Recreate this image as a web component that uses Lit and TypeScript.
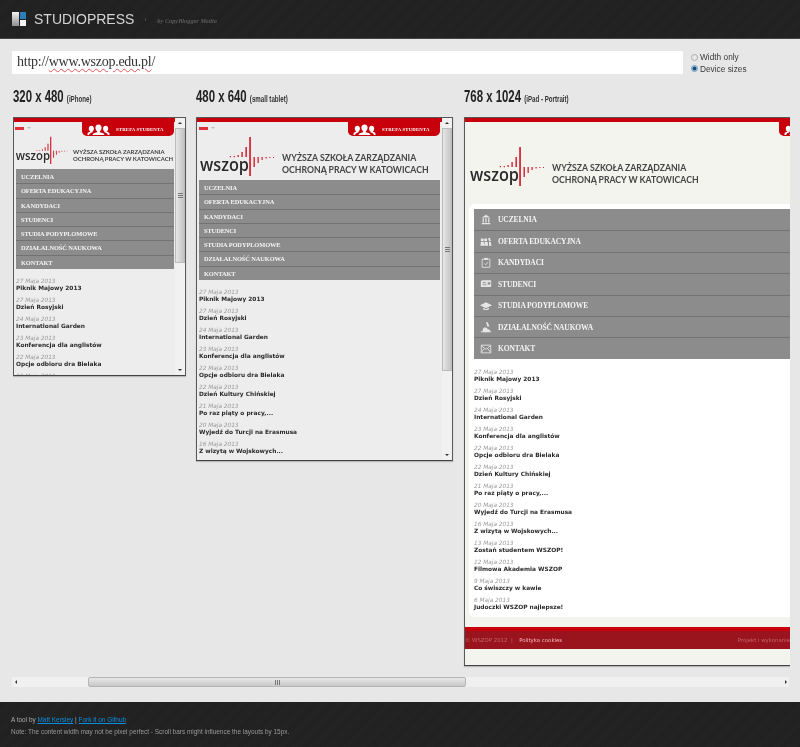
import { LitElement, html, css, svg } from "lit";
import { customElement, property } from "lit/decorators.js";

const NEWS: [string, string][] = [
  ["27 Maja 2013", "Piknik Majowy 2013"],
  ["27 Maja 2013", "Dzień Rosyjski"],
  ["24 Maja 2013", "International Garden"],
  ["23 Maja 2013", "Konferencja dla anglistów"],
  ["22 Maja 2013", "Opcje odbioru dra Bielaka"],
  ["22 Maja 2013", "Dzień Kultury Chińskiej"],
  ["21 Maja 2013", "Po raz piąty o pracy,..."],
  ["20 Maja 2013", "Wyjedź do Turcji na Erasmusa"],
  ["16 Maja 2013", "Z wizytą w Wojskowych..."],
  ["13 Maja 2013", "Zostań studentem WSZOP!"],
  ["12 Maja 2013", "Filmowa Akademia WSZOP"],
  ["9 Maja 2013", "Co świszczy w kawie"],
  ["6 Maja 2013", "Judoczki WSZOP najlepsze!"],
];

const ICONS = [
  svg`<path d="M2 4 7 1l5 3zM3 5h1.500v5H3zM6.200 5h1.500v5H6.200zM9.500 5H11v5H9.500zM2 10.500h10V12H2z"/>`,
  svg`<path d="M1 3h3.200v3H1zM5 3h3.200v3H5zM9.500 2.500l2-.6 1.200 4-2 .6zM1 7h3.500l.5 4.500H.5zM5.500 7H9l.5 4.500H5zM10.500 7h2l1 4.500h-3z"/>`,
  svg`<path fill="none" stroke="currentColor" stroke-width="1" d="M2.500 2.500h9v9.500h-9zM5.500 7.500l1.300 1.500L9 6"/><path d="M5 1h4v2.500H5z"/>`,
  svg`<path d="M1 3.500 3 2.500h10v8H1z"/><path fill="#8c8c8c" d="M3 5h4v1H3zM9 5h3v2.500H9zM3 7.500h5v1H3z"/>`,
  svg`<path d="M7 2.500 14 6 7 9.500 0 6zM3.500 9v1.700c2 1.300 5 1.300 7 0V9L7 10.800z"/>`,
  svg`<path d="M7 1.500h2l2 5H8.500zM6 7.500a3 3 0 1 1-1 .2zM10 9.500a1.600 1.600 0 1 1-.1 0zM1 12h12v1H1z"/>`,
  svg`<path fill="none" stroke="currentColor" stroke-width="1" d="M1.500 2.500h11v9h-11zM1.500 3 7 7.500 12.500 3M1.500 11 5 6.500M12.500 11 9 6.500"/>`,
];

const MENU = ["Uczelnia", "Oferta edukacyjna", "Kandydaci", "Studenci", "Studia podyplomowe", "Działalność naukowa", "Kontakt"];

const logo = svg`
  <text x="1" y="34.700" class="wz" textLength="49" lengthAdjust="spacingAndGlyphs">wszop</text>
  <g fill="#d4202c">
    <path d="M50.200 1h1.700v39h-1.700zM46.400 11h1.500v10h-1.500zM42.400 16h1.400v5h-1.400zM38.500 19h1.300v2h-1.300zM34.700 20h1.200v1.200h-1.200zM30.800 20h1.200v1.200h-1.200z"/>
    <path d="M54.500 21h1.400v10h-1.400zM58.500 21h1.300v6h-1.300zM62.500 21h1.200v3h-1.200zM66.500 21h1.200v1.400h-1.200zM70.300 21h1.100v1.100h-1.100zM74 21h1v1h-1z"/>
  </g>`;

const people = svg`
  <path d="M12 .5c2.200 0 3.400 1.700 3.400 3.700 0 1.600-.8 3-1.900 3.700v1c2.800.6 5 1.400 5 3v.6h-13v-.6c0-1.600 2.200-2.400 5-3v-1C9.400 7.200 8.600 5.800 8.600 4.200 8.600 2.200 9.800.5 12 .5z"/>
  <path d="M4.200 2c1.800 0 2.800 1.400 2.800 3.100 0 1.300-.6 2.400-1.500 3v1c-2.200.6-3.200 1.400-3.800 2.900H0v-1.300c0-1.100 1.300-1.700 3-2.200v-.4C2 7.500 1.400 6.400 1.400 5.100 1.400 3.400 2.400 2 4.200 2zM19.800 2c1.800 0 2.800 1.400 2.800 3.100 0 1.300-.6 2.400-1.600 3v.4c1.700.5 3 1.100 3 2.200V12h-1.700c-.6-1.500-1.600-2.300-3.800-2.900v-1c-.9-.6-1.500-1.700-1.500-3C17 3.400 18 2 19.800 2z"/>`;

@customElement("device-frame")
class DeviceFrame extends LitElement {
  @property() variant = "s";

  static styles = css`
    :host { display: block; }
    .frame {
      display: flex; box-sizing: border-box; overflow: hidden;
      border: 1px solid #55595c; border-bottom-color: #444; background: #ededed;
      box-shadow: 0 1px 1px rgba(0,0,0,.2);
    }
    .frame.s { width: 173px; height: 259px; }
    .frame.m { width: 257px; height: 344px; }
    .frame.l { width: 326px; height: 549px; border-right: 0; background: #f4f4ef; }
    .page { flex: 1; min-width: 0; overflow: hidden; display: flex; flex-direction: column; }
    .stripe { height: 4px; flex: none; background: #c7000b; }
    .top { flex: none; display: flex; height: 14px; }
    .s .top { padding-left: 1px; }
    .m .top { padding-left: 2px; }
    .l .top { justify-content: flex-start; padding-left: 314px; }
    .flag { width: 9px; height: 3px; margin-top: 5px; background: #e2303a; }
    .caret { width: 0; height: 0; margin: 5px 0 0 3px; border: 2px solid transparent; border-top-color: #bbb; }
    .l .flag, .l .caret { display: none; }
    .tab {
      flex: none; width: 92px; height: 14px; box-sizing: border-box; margin-left: auto;
      display: flex; align-items: center; padding-left: 5px; gap: 6px;
      background: #c7000b; border-radius: 0 0 5px 5px; color: #fff;
    }
    .s .tab { margin-right: 1px; }
    .m .tab { margin-right: 2px; }
    .l .tab { margin: 0; border-radius: 0 0 0 5px; }
    .tab svg { width: 23px; height: 11px; fill: #fff; flex: none; }
    .tab span { font: bold 4.800px "Liberation Serif", serif; white-space: nowrap; letter-spacing: .15px; }
    .brand { flex: none; display: flex; align-items: flex-start; box-sizing: border-box; }
    .brand svg { flex: none; display: block; overflow: visible; }
    .wz { font: 600 18px "Open Sans", sans-serif; fill: #2a2a2a; }
    .tag { font: 700 8.700px/11.500px "Lato", sans-serif; color: #454545; white-space: nowrap; }
    .s .brand { height: 33px; padding: 0 0 0 1px; }
    .s .brand svg { width: 56px; height: 30px; }
    .s .tag { font-size: 5.950px; line-height: 7.200px; margin: 12px 0 0 2px; }
    .m .brand { height: 44px; padding: 0 0 0 2px; }
    .m .brand svg { width: 80px; height: 43px; }
    .m .tag { margin: 16px 0 0 3px; }
    .l .brand { height: 68px; padding: 10px 0 0 4px; }
    .l .brand svg { width: 80px; height: 43px; }
    .l .tag { margin: 16px 0 0 3px; }
    .panel { flex: 1; }
    .l .panel { flex: none; height: 413px; margin-left: 4px; padding: 5px 0 0 5px; box-sizing: border-box; background: #fff; border-radius: 6px 0 0 6px; }
    .menu { list-style: none; margin: 0; padding: 0; background: #8c8c8c; color: #f4f4f4; }
    .s .menu { margin: 0 1px 0 2px; }
    .m .menu { margin: 0 2px 0 2px; }
    .menu li {
      display: flex; align-items: center; box-sizing: border-box; text-transform: uppercase;
      font: bold 6.400px "Liberation Serif", serif; letter-spacing: -.1px; border-top: 1px solid #727272;
    }
    .menu li:first-child { border-top: 0; }
    .s .menu li, .m .menu li { height: 14.250px; padding-left: 5px; }
    .l .menu li { height: 21.400px; padding-left: 6px; font-size: 7.500px; }
    .menu svg { display: none; width: 12px; height: 12px; margin-right: 6px; fill: #e6e6e6; color: #e6e6e6; flex: none; }
    .l .menu svg { display: block; }
    .news { margin: 0; padding: 0; list-style: none; }
    .s .news { padding: 9px 0 0 2px; }
    .m .news { padding: 9px 0 0 2px; }
    .l .news { padding: 10px 0 0 0; }
    .news li { height: 19px; font: 6px/7px "DejaVu Sans", sans-serif; color: #999; white-space: nowrap; }
    .news i { display: block; font-style: italic; font-size: 5.800px; }
    .news b { display: block; color: #2a2a2a; font-size: 5.850px; }
    .foot { flex: none; margin-top: 10px; border-top: 4px solid #c7000b; height: 18px; background: #99141c; display: flex; align-items: center; justify-content: space-between; font: 5.400px "DejaVu Sans", sans-serif; color: #c3666b; white-space: nowrap; }
    .foot b { color: #f3b8bb; font-weight: normal; margin-left: 3px; }
    .foot span:first-child { margin-left: 0; }
    .bar { flex: none; width: 10px; background: #f1f1f1; display: flex; flex-direction: column; align-items: stretch; }
    .arr { flex: none; height: 10px; display: flex; align-items: center; justify-content: center; font-size: 0; }
    .arr::before { content: ""; border: 2.500px solid transparent; }
    .up::before { border-bottom-color: #333; margin-bottom: 2px; }
    .dn::before { border-top-color: #333; margin-top: 2px; }
    .thumb { box-sizing: border-box; border: 1px solid #bbb; background: linear-gradient(90deg, #e6e6e6, #c4c4c4); display: flex; align-items: center; justify-content: center; }
    .s .thumb { height: 135px; }
    .m .thumb { height: 243px; }
    .grip { width: 5px; height: 5px; background: repeating-linear-gradient(180deg, #777 0 1px, transparent 1px 2px); }
    .space { flex: 1; }
  `;

  render() {
    const v = this.variant;
    const count = v === "s" ? 6 : v === "m" ? 9 : 13;
    return html`
      <div class="frame ${v}">
        <div class="page ${v}">
          <div class="stripe"></div>
          <div class="top">
            <div class="flag"></div>
            <div class="caret"></div>
            <div class="tab"><svg viewBox="0 0 24 12">${people}</svg><span>STREFA STUDENTA</span></div>
          </div>
          <div class="brand">
            <svg viewBox="0 0 80 43">${logo}</svg>
            <div class="tag">WYŻSZA SZKOŁA ZARZĄDZANIA<br />OCHRONĄ PRACY W KATOWICACH</div>
          </div>
          <div class="panel">
            <ul class="menu">
              ${MENU.map((m, i) => html`<li><svg viewBox="0 0 14 14">${ICONS[i]}</svg>${m}</li>`)}
            </ul>
            <ul class="news">
              ${NEWS.slice(0, count).map(([d, t]) => html`<li><i>${d}</i><b>${t}</b></li>`)}
            </ul>
          </div>
          ${v === "l"
            ? html`<div class="foot"><span>© WSZOP 2012 &nbsp;|&nbsp; <b>Polityka cookies</b></span><span>Projekt i wykonanie</span></div>`
            : ""}
        </div>
        ${v === "l"
          ? ""
          : html`<div class="bar">
              <div class="arr up"></div>
              <div class="thumb"><div class="grip"></div></div>
              <div class="space"></div>
              <div class="arr dn"></div>
            </div>`}
      </div>
    `;
  }
}

@customElement("app-root")
class AppRoot extends LitElement {
  static styles = css`
    :host { display: block; width: 800px; height: 747px; overflow: hidden; background: #e7e7e7; font-family: "Liberation Sans", Arial, sans-serif; filter: blur(.35px); }
    .head {
      height: 39px; box-sizing: border-box; border-bottom: 1px solid #444; display: flex; align-items: center; padding-left: 12px;
      background: repeating-linear-gradient(135deg, #202020 0 1px, #242424 1px 2px);
    }
    .mark { width: 14px; height: 14px; display: grid; grid-template-columns: 7px 6px; grid-template-rows: 7px 6px; gap: 1px; flex: none; }
    .mark i:nth-child(1) { grid-row: 1 / 3; background: linear-gradient(#f2f2f2, #8f8f8f); }
    .mark i:nth-child(2) { background: #2c7fbd; }
    .mark i:nth-child(3) { background: #f4f4f4; }
    .word { margin-left: 8px; font-size: 14px; color: #d4d4d4; }
    .dot { width: 1px; height: 3px; background: #444; margin-left: 11px; }
    .by { margin-left: 11px; font: italic bold 6.300px "Liberation Serif", serif; color: #5c5c5c; margin-top: 2px; }
    .url { display: flex; height: 23px; margin-top: 12px; padding-left: 12px; }
    .input { width: 671px; height: 23px; background: #fff; box-sizing: border-box; padding-left: 5px; font: 14px/22px "Liberation Serif", serif; color: #333; letter-spacing: -.25px; white-space: nowrap; }
    .input span { text-decoration: underline wavy #e25555 1px; text-underline-offset: 2px; }
    .opts { margin: 1px 0 0 8px; font-size: 8.300px; color: #3a3a3a; display: flex; flex-direction: column; gap: 1px; }
    .opts label { display: flex; align-items: center; gap: 2px; height: 11px; }
    .rad { width: 5px; height: 5px; border-radius: 50%; border: 1px solid #aaa; background: #e8e8e8; }
    .rad.on { border-color: #7a9cb8; background: radial-gradient(circle, #12507f 0 1.500px, #cfe0ec 2.500px); }
    .row { display: flex; align-items: flex-start; width: 777px; margin: 15px 0 0 13px; overflow: hidden; height: 581px; }
    .col { flex: none; }
    .col1 { margin-right: 10px; }
    .col2 { margin-right: 11px; }
    .col3 { width: 326px; }
    h2 { margin: 0; height: 28px; font: bold 17px/16px "Liberation Sans", sans-serif; color: #222; white-space: nowrap; }
    h2 span { display: inline-block; transform: scaleX(.67); transform-origin: 0 50%; }
    h2 small { font-size: 9.200px; color: #333; }
    .hs { display: flex; width: 777px; height: 10px; margin: 7px 0 0 12px; background: #f0f0f0; align-items: center; }
    .hs .a { flex: none; width: 7px; display: flex; justify-content: center; }
    .hs .a::before { content: ""; border: 2.500px solid transparent; }
    .hs .l::before { border-right-color: #333; margin-right: 2px; }
    .hs .r::before { border-left-color: #333; margin-left: 2px; }
    .hs .gapl { flex: none; width: 69px; }
    .hs .gapr { flex: 1; }
    .hs .t { flex: none; width: 378px; height: 10px; box-sizing: border-box; border: 1px solid #b5b5b5; background: linear-gradient(#e8e8e8, #c8c8c8); display: flex; justify-content: center; align-items: center; border-radius: 2px; }
    .hs .g { width: 5px; height: 5px; background: repeating-linear-gradient(90deg, #777 0 1px, transparent 1px 2px); }
    .foot { margin-top: 15px; height: 45px; box-sizing: border-box; padding: 12px 0 0 11px; background: repeating-linear-gradient(135deg, #202020 0 1px, #242424 1px 2px); color: #aaa; font-size: 6.450px; line-height: 11.500px; }
    .foot a { color: #0a8fe0; text-decoration: underline; }
    .foot .n { color: #999; }
  `;

  render() {
    return html`
      <div class="head">
        <div class="mark"><i></i><i></i><i></i></div>
        <div class="word">STUDIOPRESS</div>
        <div class="dot"></div>
        <div class="by">by CopyBlogger Media</div>
      </div>
      <div class="url">
        <div class="input">http://<span>www.wszop.edu.pl</span>/</div>
        <div class="opts">
          <label><i class="rad"></i>Width only</label>
          <label><i class="rad on"></i>Device sizes</label>
        </div>
      </div>
      <div class="row">
        <div class="col col1">
          <h2><span>320 x 480 <small>(iPhone)</small></span></h2>
          <device-frame variant="s"></device-frame>
        </div>
        <div class="col col2">
          <h2><span>480 x 640 <small>(small tablet)</small></span></h2>
          <device-frame variant="m"></device-frame>
        </div>
        <div class="col col3">
          <h2><span>768 x 1024 <small>(iPad - Portrait)</small></span></h2>
          <device-frame variant="l"></device-frame>
        </div>
      </div>
      <div class="hs">
        <div class="a l"></div><div class="gapl"></div>
        <div class="t"><div class="g"></div></div>
        <div class="gapr"></div><div class="a r"></div>
      </div>
      <div class="foot">
        <div>A tool by <a>Matt Kersley</a> | <a>Fork it on Github</a></div>
        <div class="n">Note: The content width may not be pixel perfect - Scroll bars might influence the layouts by 15px.</div>
      </div>
    `;
  }
}
